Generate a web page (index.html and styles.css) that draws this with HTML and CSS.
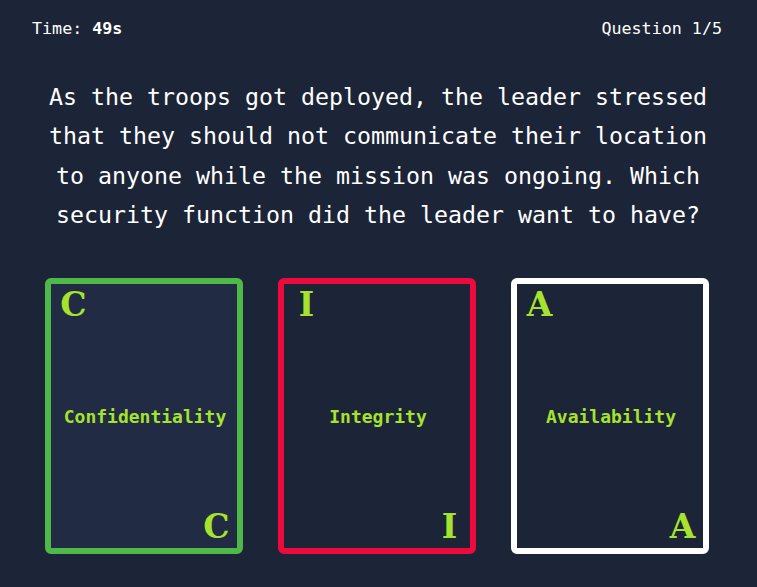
FILE: index.html
```html
<!DOCTYPE html>
<html>
<head>
<meta charset="utf-8">
<link rel="stylesheet" href="styles.css">
</head>
<body>
<div class="app">
  <header class="topbar">
    <div class="timer">Time: <b>49s</b></div>
    <div class="progress">Question 1/5</div>
  </header>
  <p class="question">As the troops got deployed, the leader stressed that they should not communicate their location to anyone while the mission was ongoing. Which security function did the leader want to have?</p>
  <div class="cards">
    <div class="card card-green card-active">
      <span class="corner">C</span>
      <span class="label">Confidentiality</span>
      <span class="corner corner-bottom">C</span>
    </div>
    <div class="card card-red">
      <span class="corner">I</span>
      <span class="label">Integrity</span>
      <span class="corner corner-bottom">I</span>
    </div>
    <div class="card card-white">
      <span class="corner">A</span>
      <span class="label">Availability</span>
      <span class="corner corner-bottom">A</span>
    </div>
  </div>
</div>
</body>
</html>
```

FILE: styles.css
```css
html, body {
  margin: 0;
  padding: 0;
  background: #1c2437;
  color: #ffffff;
  font-family: "DejaVu Sans Mono", monospace;
}
.app {
  width: 757px;
  height: 587px;
  display: flex;
  flex-direction: column;
}
.topbar {
  display: flex;
  justify-content: space-between;
  padding: 18px 35px 0 32px;
  font-size: 16.7px;
  line-height: 20px;
}
.timer b { font-weight: bold; }
.question {
  margin: 39px 31px 0 30px;
  text-align: center;
  font-size: 23.25px;
  line-height: 39.3px;
}
.cards {
  display: flex;
  justify-content: center;
  gap: 35px;
  margin-top: 44px;
  padding-right: 3px;
}
.card {
  box-sizing: border-box;
  width: 198px;
  height: 276px;
  border: 6px solid #fff;
  border-radius: 6px;
  display: flex;
  flex-direction: column;
  padding: 4px 7px 4px 9px;
  color: #a6e22e;
}
.card-green { border-color: #4eb849; }
.card-red { border-color: #ee0a3c; }
.card-white { border-color: #ffffff; }
.card-active { background: #212b43; }
.corner {
  font-family: "DejaVu Serif", serif;
  font-weight: bold;
  font-size: 33px;
  line-height: 34px;
  width: 27px;
  text-align: center;
  align-self: flex-start;
}
.corner-bottom { align-self: flex-end; }
.label {
  flex: 1;
  display: flex;
  align-items: center;
  justify-content: center;
  font-weight: bold;
  font-size: 18px;
}
```
